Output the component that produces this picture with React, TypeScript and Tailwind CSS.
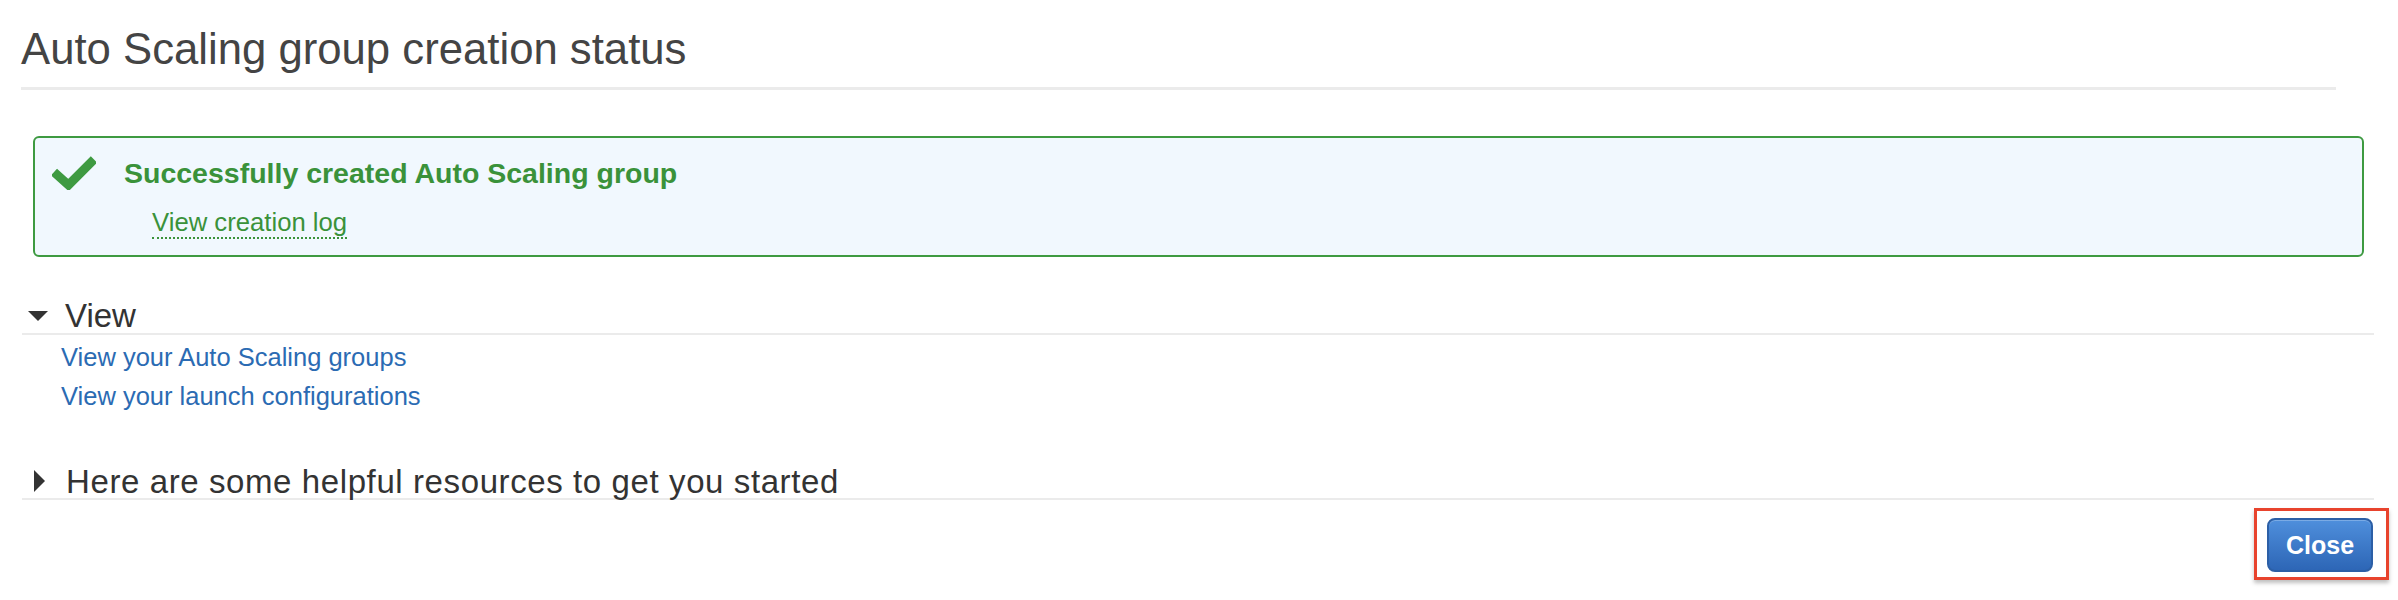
export default function App() {
  return (
    <div className="min-h-[600px] bg-white font-['Liberation_Sans',Arial,sans-serif]">
      {/* Title */}
      <div className="pt-[27px] pl-[21px] pr-[62px]">
        <h1 className="text-[43.7px] leading-[44px] text-[#444] pb-[16px] border-b-[3px] border-[#ebebeb]">
          Auto Scaling group creation status
        </h1>
      </div>

      {/* Success box */}
      <div className="mt-[46px] ml-[33px] mr-[34px] h-[121px] rounded-[6px] border-2 border-[#3e9a41] bg-[#f1f8fe] flex pt-[18px] pl-[17px]">
        <svg width="44" height="34" viewBox="0 0 44 34" className="shrink-0">
          <polyline
            points="2,16 16.5,29 42,3.5"
            fill="none"
            stroke="#3e9a41"
            strokeWidth="9"
            strokeLinejoin="miter"
          />
        </svg>
        <div className="ml-[28px] flex flex-col">
          <div className="text-[28.5px] leading-[34px] font-bold text-[#3a923a]">
            Successfully created Auto Scaling group
          </div>
          <div className="mt-[17px] ml-[28px]">
            <a className="inline-block text-[25.7px] leading-[30px] text-[#3a923a] border-b-2 border-dotted border-[#3a923a] cursor-pointer">
              View creation log
            </a>
          </div>
        </div>
      </div>

      {/* View section */}
      <div className="mt-[42px] ml-[22px] mr-[24px]">
        <div className="flex items-center border-b-2 border-[#ebebeb]">
          <div className="w-[43px] pl-[6px] flex items-center">
            <svg width="20" height="10" viewBox="0 0 20 10">
              <polygon points="0,0 20,0 10,10" fill="#333" />
            </svg>
          </div>
          <span className="text-[33px] leading-[34px] text-[#333]">View</span>
        </div>
        <div className="pt-[3px] pl-[39px] flex flex-col">
          <a className="text-[25.5px] leading-[39px] text-[#2b6bb3] cursor-pointer">
            View your Auto Scaling groups
          </a>
          <a className="text-[25.5px] leading-[39px] text-[#2b6bb3] cursor-pointer">
            View your launch configurations
          </a>
        </div>
      </div>

      {/* Resources section */}
      <div className="mt-[48px] ml-[22px] mr-[24px]">
        <div className="flex items-center border-b-2 border-[#ebebeb]">
          <div className="w-[44px] pl-[12px] flex items-center">
            <svg width="11" height="22" viewBox="0 0 11 22">
              <polygon points="0,0 11,11 0,22" fill="#333" />
            </svg>
          </div>
          <span className="text-[33px] leading-[34px] tracking-[0.6px] text-[#333] translate-y-[1px]">
            Here are some helpful resources to get you started
          </span>
        </div>
      </div>

      {/* Footer */}
      <div className="mt-[8px] flex justify-end pr-[9px]">
        <div className="border-[3px] border-[#e8432d] pt-[7px] pb-[5px] pl-[10px] pr-[13px] shadow-[0_3px_4px_rgba(0,0,0,0.25)]">
          <button className="h-[54px] w-[106px] rounded-[8px] border-2 border-[#2c5fa6] bg-gradient-to-b from-[#4f8fdc] to-[#2d66b6] text-white text-[25px] font-bold leading-none shadow-[inset_0_1px_0_rgba(255,255,255,0.25)]">
            Close
          </button>
        </div>
      </div>
    </div>
  );
}
